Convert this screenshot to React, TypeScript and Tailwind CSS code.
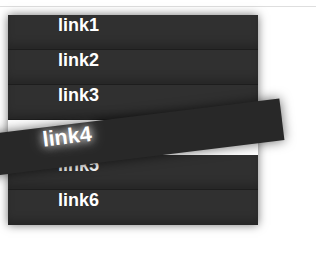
import React from 'react';

const links = ['link1', 'link2', 'link3', 'link4', 'link5', 'link6'];

export default function App() {
  return (
    <div className="min-h-[258px] w-[316px] bg-white font-['Liberation_Sans',Arial,sans-serif]">
      <div className="h-[7px] border-b border-[#dedede]" />
      <ul className="ml-[8px] mt-[8px] w-[250px] shadow-[0_0_9px_rgba(0,0,0,0.55)]">
        {links.map(l => {
          const hot = l === 'link4';
          return (
            <li
              key={l}
              className={
                hot
                  ? 'relative z-10 h-[35px] rotate-[-7deg] scale-[1.2] bg-[#282828] pl-[50px] shadow-[0_0_10px_rgba(0,0,0,0.6)]'
                  : 'h-[35px] border-b border-[#1d1d1d] bg-[#303030] pl-[50px] shadow-[inset_0_-7px_8px_-2px_rgba(0,0,0,0.22)] last:border-b-0'
              }
            >
              <a
                href="#"
                className={
                  'block text-[18px] font-bold leading-[21px] text-white' +
                  (hot ? ' [text-shadow:0_0_7px_#fff,0_0_12px_rgba(255,255,255,0.5)]' : '')
                }
              >
                {l}
              </a>
            </li>
          );
        })}
      </ul>
    </div>
  );
}
